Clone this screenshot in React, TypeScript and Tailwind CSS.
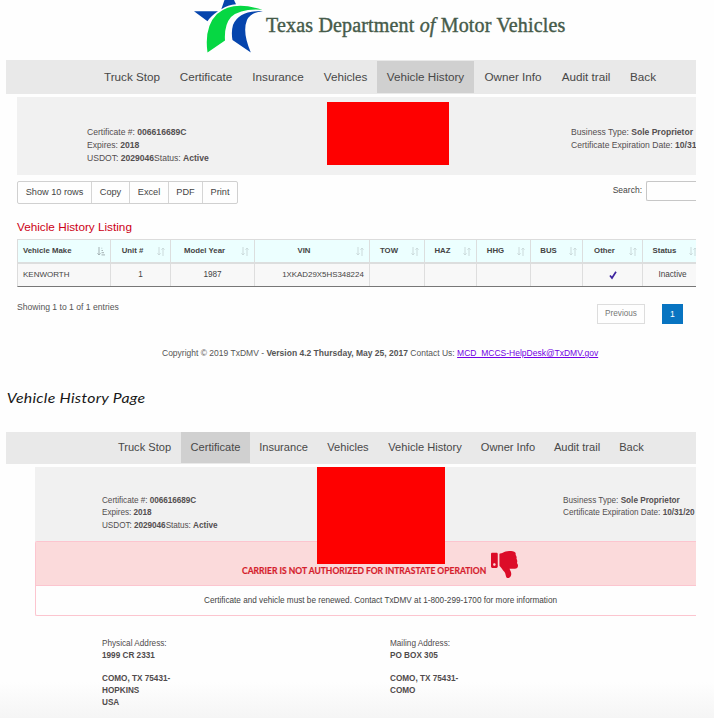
import React from 'react';
import { FaThumbsDown } from 'react-icons/fa';

const NAV = ['Truck Stop', 'Certificate', 'Insurance', 'Vehicles', 'Vehicle History', 'Owner Info', 'Audit trail', 'Back'];
const TOP_WIDTHS = ['w-[76px]', 'w-[72px]', 'w-[72px]', 'w-[63px]', 'w-[97px]', 'w-[78px]', 'w-[68px]', 'w-[46px]'];
const LOWER_WIDTHS = ['w-[73px]', 'w-[69px]', 'w-[67px]', 'w-[62px]', 'w-[92px]', 'w-[74px]', 'w-[64px]', 'w-[45px]'];

function Nav({ widths, active, className }: { widths: string[]; active: string; className: string }) {
  return (
    <nav className={`flex bg-[#e9e9e9] text-[#484848] ${className}`}>
      {NAV.map((label, i) => (
        <span key={label} className={`flex shrink-0 items-center justify-center whitespace-nowrap ${widths[i]} ${label === active ? 'bg-[#d0d0d0]' : ''}`}>
          {label}
        </span>
      ))}
    </nav>
  );
}

function Logo() {
  return (
    <svg width="72" height="56" viewBox="192 0 72 56" className="shrink-0">
      <path d="M224.5 0 L221.3 9.3 Q228 5 236 4.3 L234 0Z M194 11.3 H218 Q211 16 207.5 21.2Z" fill="#0645ad" />
      <path d="M207.5 52.5 Q204 27 217 14 Q233 0 262.5 9.8 Q241 8 231 17 Q224 25 225 40.5Z" fill="#06d743" />
      <path d="M263 11.2 Q239 10 233 25 Q231 32 232.5 40 L250.8 52.5 Q242 32 247 20 Q251 12 263 11.2Z" fill="#0645ad" />
    </svg>
  );
}

function Sort({ active = false }: { active?: boolean }) {
  return (
    <svg width="8" height="9" viewBox="0 0 8 9" fill="none" stroke={active ? '#a3b1b3' : '#cbdadb'} className="absolute right-[5px] top-[7px]">
      <path d="M2 0V8M.5 6.3L2 8L3.5 6.3" />
      {active ? <path d="M4.5 1.2H5.2M4.5 3.5H6M4.5 5.7H7M4.5 7.9H8" /> : <path d="M6 9V1M4.5 2.7L6 1L7.5 2.7" />}
    </svg>
  );
}

const COLUMNS = [
  { name: 'Vehicle Make', value: 'KENWORTH' },
  { name: 'Unit #', value: '1' },
  { name: 'Model Year', value: '1987' },
  { name: 'VIN', value: '1XKAD29X5HS348224' },
  { name: 'TOW', value: '' },
  { name: 'HAZ', value: '' },
  { name: 'HHG', value: '' },
  { name: 'BUS', value: '' },
  { name: 'Other', value: 'check' },
  { name: 'Status', value: 'Inactive' },
];

function Check() {
  return (
    <svg width="8" height="9" viewBox="0 0 8 9" fill="none" stroke="#3d249f" strokeWidth="1.7">
      <path d="M1 4.4L3 7L7 .8" />
    </svg>
  );
}

function Details() {
  return (
    <>
      <div>Certificate #: <b>006616689C</b></div>
      <div>Expires: <b>2018</b></div>
      <div>USDOT: <b>2029046</b>Status: <b>Active</b></div>
    </>
  );
}

function HistoryScreen() {
  return (
    <section className="ml-[6px] h-[372px] w-[690px] overflow-hidden">
      <header className="flex h-[60px] items-start pl-[186px]">
        <Logo />
        <h1 className="ml-[2px] mt-[12px] whitespace-nowrap font-['Liberation_Serif',serif] text-[20px] leading-[26px] tracking-[0.17px] text-[#465b4a] [-webkit-text-stroke:0.4px_#465b4a]">
          Texas Department <i>of</i> Motor Vehicles
        </h1>
      </header>
      <Nav widths={TOP_WIDTHS} active="Vehicle History" className="h-[34px] py-px pl-[88px] text-[11.7px]" />
      <div className="ml-[11px] mt-[3px] flex h-[78px] bg-[#f1f1f1] text-[8.6px] leading-[13px] text-[#544f50]">
        <div className="w-[310px] shrink-0 pl-[70px] pt-[28.5px] tracking-[-0.02px]"><Details /></div>
        <div className="mt-[5px] h-[63px] w-[122px] shrink-0 bg-[#fe0000]" />
        <div className="whitespace-nowrap pl-[122px] pt-[28.5px] tracking-[-0.02px]">
          <div>Business Type: <b>Sole Proprietor</b></div>
          <div>Certificate Expiration Date: <b>10/31</b></div>
        </div>
      </div>
      <div className="ml-[11px] flex h-[42px] items-start justify-between pt-[6px] text-[#444]">
        <div className="flex h-[23px] divide-x divide-[#d5d5d5] rounded-[2px] border border-[#d0d0d0] text-[9.2px]">
          <span className="flex w-[74px] items-center justify-center">Show 10 rows</span>
          <span className="flex w-[38px] items-center justify-center">Copy</span>
          <span className="flex w-[39px] items-center justify-center">Excel</span>
          <span className="flex w-[34px] items-center justify-center">PDF</span>
          <span className="flex w-[34px] items-center justify-center">Print</span>
        </div>
        <label className="flex text-[8.5px]">
          <span className="pt-[3px] leading-[13px]">Search:</span>
          <span className="ml-[4px] h-[20px] w-[50px] rounded-l-[2px] border border-r-0 border-[#c7c7c7]" />
        </label>
      </div>
      <h2 className="ml-[11px] h-[22px] pt-[2px] text-[11.75px] leading-[16px] text-[#cc0015]">Vehicle History Listing</h2>
      <div className="ml-[11px] grid grid-cols-[93px_60px_84px_115px_55px_52px_54px_52px_60px_60px] border-b border-l border-t border-b-[#777] border-l-[#dcdcdc] border-t-[#dcdcdc] text-[8.2px] text-[#444]">
        {COLUMNS.map((c, i) => (
          <div key={c.name} className={`relative flex h-[24px] items-center border-b-2 border-r border-[#dcdede] bg-[#ecffff] pb-px text-[7.8px] font-bold ${i === 0 ? 'pl-[5px]' : 'justify-center pr-[16px]'}`}>
            {c.name}
            <Sort active={i === 0} />
          </div>
        ))}
        {COLUMNS.map((c, i) => (
          <div key={c.name} className={`flex h-[22px] items-center border-r border-[#dedede] bg-[#f8f8f8] ${i === 0 ? 'pl-[5px] text-[8px]' : 'justify-center'} ${i === 3 ? 'pl-[22px] text-[7.9px]' : ''}`}>
            {c.value === 'check' ? <Check /> : c.value}
          </div>
        ))}
      </div>
      <div className="ml-[11px] mt-[12px] flex h-[34px] text-[8.6px] text-[#555]">
        <span className="pt-[2px] leading-[12px]">Showing 1 to 1 of 1 entries</span>
        <span className="ml-auto mt-[5px] flex h-[20px] w-[48px] items-center justify-center border border-[#ddd] text-[8.2px] text-[#777]">Previous</span>
        <span className="ml-[17px] mr-[13px] mt-[5px] flex h-[20px] w-[21px] items-center justify-center bg-[#0874c1] text-white">1</span>
      </div>
      <footer className="mt-[14px] whitespace-nowrap pl-[156px] text-[8.5px] leading-[12px] text-[#555]">
        Copyright © 2019 TxDMV - <b>Version 4.2 Thursday, May 25, 2017</b> Contact Us: <a className="text-[#7200e4] underline">MCD_MCCS-HelpDesk@TxDMV.gov</a>
      </footer>
    </section>
  );
}

function CertificateScreen() {
  return (
    <section className="ml-[6px] h-[286px] w-[690px] overflow-hidden">
      <Nav widths={LOWER_WIDTHS} active="Certificate" className="h-[32px] pb-px pl-[102px] text-[11.1px]" />
      <div className="relative ml-[29px] mt-[3px] h-[74px] bg-[#f1f1f1] text-[8.2px] leading-[12.5px] text-[#544f50]">
        <div className="flex pt-[27.5px]">
          <div className="w-[528px] shrink-0 pl-[67px] tracking-[-0.04px]"><Details /></div>
          <div className="whitespace-nowrap">
            <div>Business Type: <b>Sole Proprietor</b></div>
            <div>Certificate Expiration Date: <b>10/31/20</b></div>
          </div>
        </div>
        <div className="absolute left-[282px] top-0 h-[97px] w-[128px] bg-[#fe0000]" />
      </div>
      <div className="ml-[29px] rounded-l-[2px] border border-r-0 border-[#fcc5cf]">
        <div className="flex h-[43px] bg-[#fbdadb] pl-[206px] text-[#d51d2d]">
          <span className="w-[245px] shrink-0 origin-left scale-x-[0.87] whitespace-nowrap pt-[21px] font-['Lato',sans-serif] text-[9.8px] font-bold leading-[14px] [-webkit-text-stroke:0.2px_#d51d2d]">CARRIER IS NOT AUTHORIZED FOR INTRASTATE OPERATION</span>
          <FaThumbsDown className="ml-[4px] mt-[9px] h-[27px] w-[27px] shrink-0 text-[#dc0c28]" />
        </div>
        <div className="h-[30px] whitespace-nowrap border-t border-[#fcc5cf] pl-[168px] text-[8.2px] leading-[29px] text-[#444]">
          Certificate and vehicle must be renewed. Contact TxDMV at 1-800-299-1700 for more information
        </div>
      </div>
      <div className="mt-[22px] flex pl-[96px] text-[8.2px] leading-[11.8px] text-[#504b4c]">
        <div className="w-[288px]">
          <p>Physical Address:</p>
          <p className="font-bold">1999 CR 2331<br /><br />COMO, TX 75431-<br />HOPKINS<br />USA</p>
        </div>
        <div>
          <p>Mailing Address:</p>
          <p className="font-bold">PO BOX 305<br /><br />COMO, TX 75431-<br />COMO</p>
        </div>
      </div>
    </section>
  );
}

export default function App() {
  return (
    <main className="h-[718px] w-[714px] overflow-hidden bg-[linear-gradient(#fefefe_0,#fefefe_682px,#f5f5f5_718px)] font-['Liberation_Sans',Arial,sans-serif]">
      <HistoryScreen />
      <p className="h-[60px] origin-left scale-x-[1.13] whitespace-nowrap pl-[6px] pt-[17px] font-['Lato',sans-serif] text-[14px] italic leading-[18px] tracking-[0.25px] text-[#181818]">Vehicle History Page</p>
      <CertificateScreen />
    </main>
  );
}
